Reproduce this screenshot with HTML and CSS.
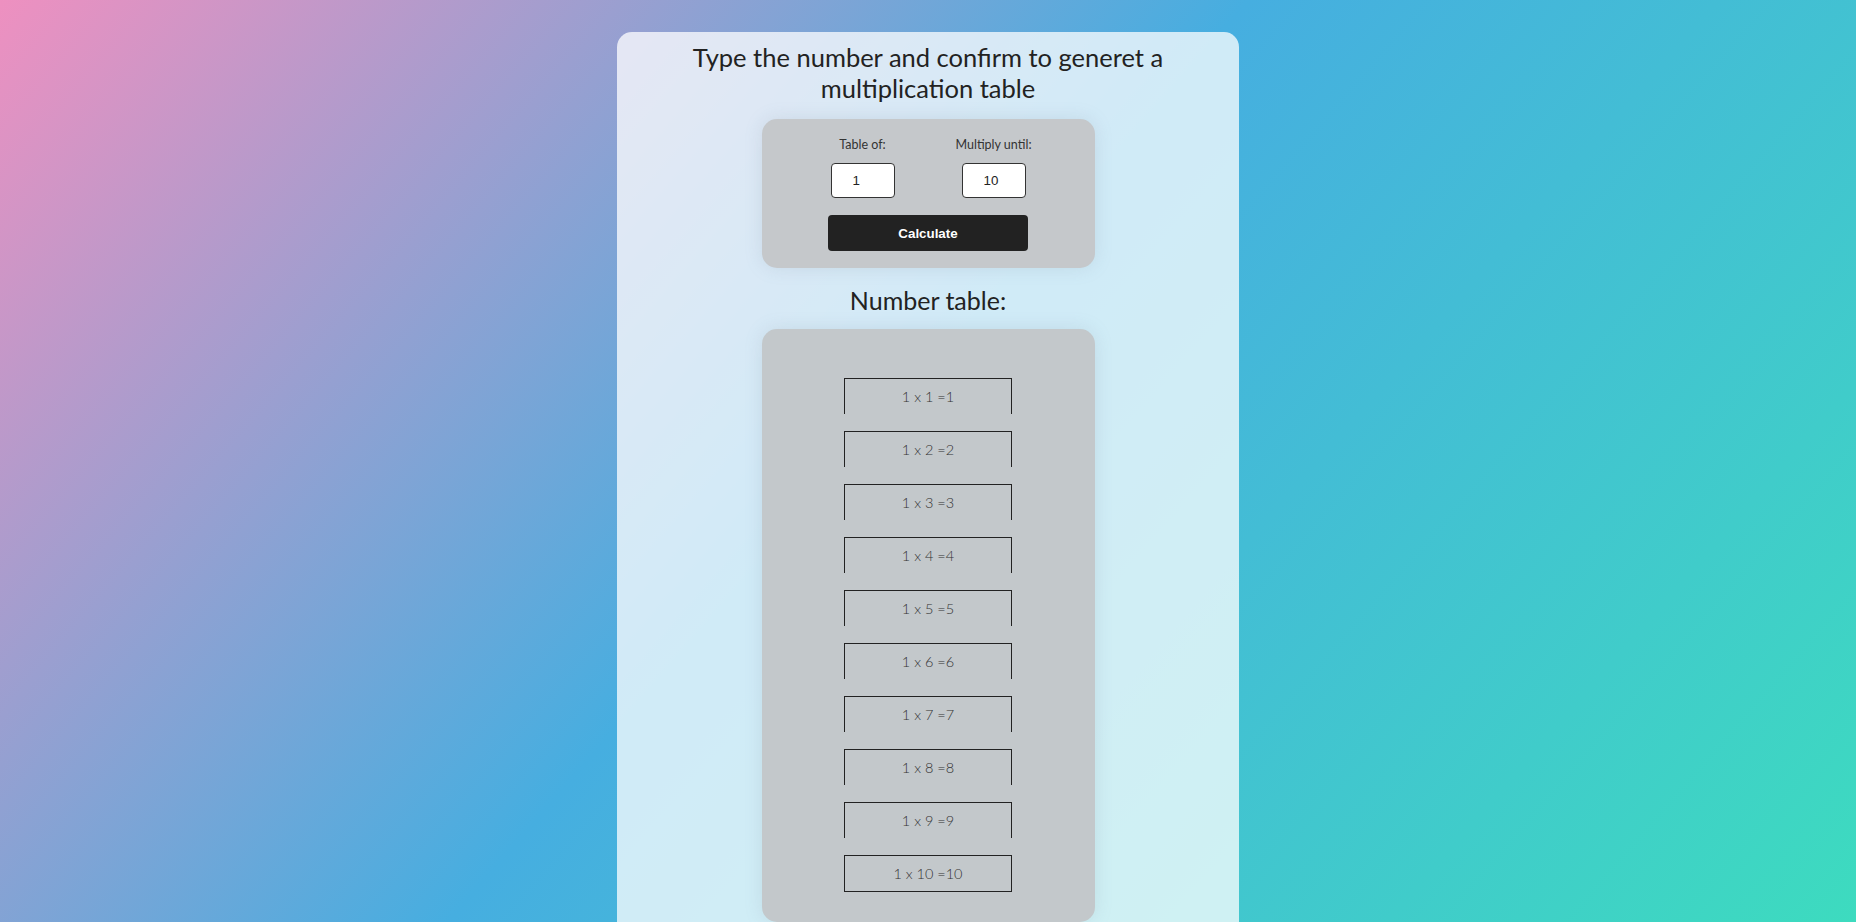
FILE: index.html
```html
<!DOCTYPE html>
<html lang="en">
<head>
<meta charset="utf-8">
<title>Multiplication table</title>
<link rel="stylesheet" href="styles.css">
</head>
<body>
<main class="card">
  <h1 class="title">Type the number and confirm to generet a multiplication table</h1>
  <section class="form-box">
    <div class="fields">
      <label class="field">
        <span class="field-label">Table of:</span>
        <input class="field-input" type="text" value="1">
      </label>
      <label class="field">
        <span class="field-label">Multiply until:</span>
        <input class="field-input" type="text" value="10">
      </label>
    </div>
    <button class="calc-btn" type="button">Calculate</button>
  </section>
  <h2 class="subtitle">Number table:</h2>
  <section class="table-box">
    <div class="row">1 x 1 =1</div>
    <div class="row">1 x 2 =2</div>
    <div class="row">1 x 3 =3</div>
    <div class="row">1 x 4 =4</div>
    <div class="row">1 x 5 =5</div>
    <div class="row">1 x 6 =6</div>
    <div class="row">1 x 7 =7</div>
    <div class="row">1 x 8 =8</div>
    <div class="row">1 x 9 =9</div>
    <div class="row">1 x 10 =10</div>
  </section>
</main>
</body>
</html>
```
FILE: styles.css
```css
html {
  background: linear-gradient(131deg, #ee90c0 0%, #46aee0 47%, #3ddbbf 100%);
  background-attachment: fixed;
  min-height: 100%;
}

body {
  margin: 0;
  padding: 32px 0 40px;
  font-family: "Lato", "Noto Sans", sans-serif;
  color: #222;
}

.card {
  width: 622px;
  margin: 0 auto;
  background: rgba(255, 255, 255, 0.75);
  border-radius: 15px;
  padding: 10px 0 40px;
  display: flex;
  flex-direction: column;
  align-items: center;
}

.title {
  margin: 0;
  width: 500px;
  font-size: 25.5px;
  line-height: 31px;
  font-weight: 400;
  text-align: center;
  color: #222;
}

.form-box {
  margin-top: 15px;
  width: 333px;
  box-sizing: border-box;
  padding: 17px 0;
  background: #c5c8cb;
  border-radius: 15px;
  box-shadow: 0 0 18px rgba(120, 140, 160, 0.18);
  display: flex;
  flex-direction: column;
  align-items: center;
  gap: 17px;
}

.fields {
  display: grid;
  grid-template-columns: 131px 131px;
  justify-content: center;
}

.field {
  display: flex;
  flex-direction: column;
  align-items: center;
  gap: 10px;
}

.field-label {
  font-size: 12.5px;
  line-height: 17px;
  color: #333;
}

.field-input {
  width: 64px;
  height: 35px;
  box-sizing: border-box;
  border: 1px solid #333;
  border-radius: 4px;
  background: #fff;
  padding: 0 0 0 21px;
  font-family: "Liberation Sans", Arial, sans-serif;
  font-size: 13.33px;
  color: #222;
  outline: none;
}

.calc-btn {
  width: 200px;
  height: 36px;
  border: none;
  border-radius: 4px;
  background: #222;
  color: #fff;
  font-family: "Liberation Sans", Arial, sans-serif;
  font-weight: 700;
  font-size: 13.33px;
  cursor: pointer;
}

.subtitle {
  margin: 17px 0 14px;
  font-size: 25px;
  line-height: 30px;
  font-weight: 400;
  color: #222;
}

.table-box {
  width: 333px;
  box-sizing: border-box;
  padding: 49px 0 30px;
  background: #c3c8cb;
  border-radius: 15px;
  box-shadow: 0 0 18px rgba(120, 140, 160, 0.18);
  display: flex;
  flex-direction: column;
  align-items: center;
  gap: 17px;
}

.row {
  width: 168px;
  height: 36px;
  box-sizing: border-box;
  border: 1px solid #222;
  border-bottom: none;
  display: flex;
  align-items: center;
  justify-content: center;
  font-size: 14.5px;
  font-weight: 300;
  color: #333;
}

.row:last-child {
  height: 37px;
  border-bottom: 1px solid #222;
}
```
